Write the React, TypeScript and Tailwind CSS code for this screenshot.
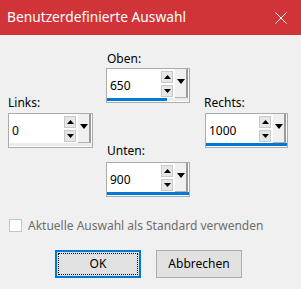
import React from "react"

interface SpinBoxProps {
	value: string
	fill: number
	width: string
}

// Up / down arrow drawn as a small filled triangle
function Arrow({ down }: { down?: boolean }) {
	return (
		<svg width="7" height="4" viewBox="0 0 7 4">
			{down ? <polygon points="0,0 7,0 3.5,4" fill="#000" /> : <polygon points="0,4 7,4 3.5,0" fill="#000" />}
		</svg>
	)
}

// Number field with spin buttons, drop-down button and a value bar along the bottom
function SpinBox({ value, fill, width }: SpinBoxProps) {
	return (
		<div className={`${width} h-[35px] border border-[#acacac] bg-white flex flex-col`}>
			<div className="h-[29px] flex">
				<div className="flex-1 pl-[3px] pt-[4px] flex items-center text-[12px] text-black">{value}</div>
				<div className="flex flex-col pt-[2px] gap-[2px]">
					<div className="w-[12px] h-[12px] bg-[#e6e6e6] border border-[#c9c9c9] flex items-center justify-center">
						<Arrow />
					</div>
					<div className="w-[12px] h-[12px] bg-[#e6e6e6] border border-[#c9c9c9] flex items-center justify-center">
						<Arrow down />
					</div>
				</div>
				<div className="ml-[2px] mr-[1px] w-[13px] bg-[#f0f0f0] border-r-2 border-b border-r-[#9a9a9a] border-b-[#b4b4b4] flex justify-center pt-[10px]">
					<svg width="8" height="5" viewBox="0 0 8 5">
						<polygon points="0,0 8,0 4,5" fill="#000" />
					</svg>
				</div>
			</div>
			<div className="h-[3px] bg-[#ebebeb]">
				<div className="h-full bg-[#0078d7]" style={{ width: `${fill}%` }} />
			</div>
		</div>
	)
}

export default function App() {
	return (
		<div className="w-[301px] h-[289px] bg-[#f0f0f0] font-['Noto_Sans',sans-serif] text-[12px] text-black flex flex-col">
			<div className="h-[35px] bg-[#d13438] flex items-center justify-between pl-[7px] pr-[14px] text-white">
				<span className="text-[13.75px]">Benutzerdefinierte Auswahl</span>
				<svg width="12" height="12" viewBox="0 0 12 12">
					<path d="M0.5 0.5 L11.5 11.5 M11.5 0.5 L0.5 11.5" stroke="#fff" strokeWidth="1" />
				</svg>
			</div>

			<div className="flex pl-[8px]">
				<div className="pt-[60px]">
					<div className="h-[16px] leading-[16px] mb-[2px]">Links:</div>
					<SpinBox value="0" fill={0} width="w-[85px]" />
				</div>
				<div className="ml-[13px] pt-[16px]">
					<div className="h-[16px] leading-[16px] mb-[1px] pl-[1px]">Oben:</div>
					<SpinBox value="650" fill={73} width="w-[84px]" />
					<div className="h-[16px] leading-[16px] mt-[40px] mb-[3px] pl-[1px]">Unten:</div>
					<SpinBox value="900" fill={100} width="w-[84px]" />
				</div>
				<div className="ml-[15px] pt-[60px]">
					<div className="h-[16px] leading-[16px] mb-[2px] -ml-[1px]">Rechts:</div>
					<SpinBox value="1000" fill={100} width="w-[83px]" />
				</div>
			</div>

			<div className="mt-[21px] pl-[9px] flex items-center gap-[6px] h-[15px]">
				<div className="w-[13px] h-[13px] border border-[#c4c4c4] bg-[#fdfdfd]" />
				<span className="text-[#6d6d6d]">Aktuelle Auswahl als Standard verwenden</span>
			</div>

			<div className="mt-[17px] flex pl-[55px] gap-[15px]">
				<button className="w-[86px] h-[28px] bg-[#e1e1e1] border-2 border-[#0078d7] p-[1px]">
					<div className="w-full h-full border border-dotted border-black flex items-center justify-center">OK</div>
				</button>
				<button className="w-[86px] h-[28px] bg-[#e1e1e1] border border-[#adadad] flex items-center justify-center">
					Abbrechen
				</button>
			</div>
		</div>
	)
}
